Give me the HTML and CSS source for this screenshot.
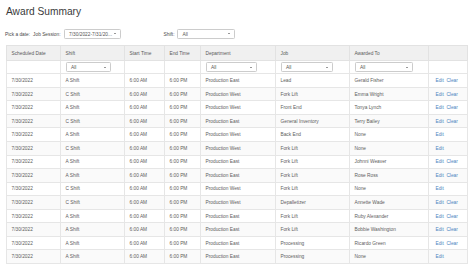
FILE: index.html
```html
<!DOCTYPE html>
<html>
<head>
<meta charset="utf-8">
<link rel="stylesheet" href="styles.css">
</head>
<body>
<div class="page">
  <h1 class="title">Award Summary</h1>
  <div class="controls">
    <span class="lbl lbl-date">Pick a date:</span>
    <span class="lbl lbl-session">Job Session:</span>
    <div class="sel sel-session"><span>7/30/2022-7/31/20...</span><i class="caret"></i></div>
    <span class="lbl lbl-shift">Shift:</span>
    <div class="sel sel-shift"><span>All</span><i class="caret"></i></div>
  </div>
  <table class="grid">
    <colgroup>
      <col class="c-date"><col class="c-shift"><col class="c-start"><col class="c-end"><col class="c-dept"><col class="c-job"><col class="c-aw"><col class="c-act">
    </colgroup>
    <thead>
      <tr class="head">
        <th>Scheduled Date</th><th>Shift</th><th>Start Time</th><th>End Time</th><th>Department</th><th>Job</th><th>Awarded To</th><th></th>
      </tr>
      <tr class="filters">
        <td></td>
        <td><div class="sel f-shift"><span>All</span><i class="caret"></i></div></td>
        <td></td><td></td>
        <td><div class="sel f-dept"><span>All</span><i class="caret"></i></div></td>
        <td><div class="sel f-job"><span>All</span><i class="caret"></i></div></td>
        <td><div class="sel f-aw"><span>All</span><i class="caret"></i></div></td>
        <td></td>
      </tr>
    </thead>
    <tbody>
      <tr><td>7/30/2022</td><td>A Shift</td><td>6:00 AM</td><td>6:00 PM</td><td>Production East</td><td>Lead</td><td>Gerald Fisher</td><td class="act"><a class="lnk">Edit</a><a class="lnk clr">Clear</a></td></tr>
      <tr><td>7/30/2022</td><td>C Shift</td><td>6:00 AM</td><td>6:00 PM</td><td>Production West</td><td>Fork Lift</td><td>Emma Wright</td><td class="act"><a class="lnk">Edit</a><a class="lnk clr">Clear</a></td></tr>
      <tr><td>7/30/2022</td><td>A Shift</td><td>6:00 AM</td><td>6:00 PM</td><td>Production West</td><td>Front End</td><td>Tonya Lynch</td><td class="act"><a class="lnk">Edit</a><a class="lnk clr">Clear</a></td></tr>
      <tr><td>7/30/2022</td><td>C Shift</td><td>6:00 AM</td><td>6:00 PM</td><td>Production East</td><td>General Inventory</td><td>Terry Bailey</td><td class="act"><a class="lnk">Edit</a><a class="lnk clr">Clear</a></td></tr>
      <tr><td>7/30/2022</td><td>A Shift</td><td>6:00 AM</td><td>6:00 PM</td><td>Production West</td><td>Back End</td><td>None</td><td class="act"><a class="lnk">Edit</a></td></tr>
      <tr><td>7/30/2022</td><td>C Shift</td><td>6:00 AM</td><td>6:00 PM</td><td>Production West</td><td>Fork Lift</td><td>None</td><td class="act"><a class="lnk">Edit</a></td></tr>
      <tr><td>7/30/2022</td><td>A Shift</td><td>6:00 AM</td><td>6:00 PM</td><td>Production East</td><td>Fork Lift</td><td>Johnni Weaver</td><td class="act"><a class="lnk">Edit</a><a class="lnk clr">Clear</a></td></tr>
      <tr><td>7/30/2022</td><td>A Shift</td><td>6:00 AM</td><td>6:00 PM</td><td>Production East</td><td>Fork Lift</td><td>Rose Ross</td><td class="act"><a class="lnk">Edit</a><a class="lnk clr">Clear</a></td></tr>
      <tr><td>7/30/2022</td><td>C Shift</td><td>6:00 AM</td><td>6:00 PM</td><td>Production West</td><td>Fork Lift</td><td>None</td><td class="act"><a class="lnk">Edit</a></td></tr>
      <tr><td>7/30/2022</td><td>C Shift</td><td>6:00 AM</td><td>6:00 PM</td><td>Production West</td><td>Depalletizer</td><td>Annette Wade</td><td class="act"><a class="lnk">Edit</a><a class="lnk clr">Clear</a></td></tr>
      <tr><td>7/30/2022</td><td>A Shift</td><td>6:00 AM</td><td>6:00 PM</td><td>Production East</td><td>Fork Lift</td><td>Ruby Alexander</td><td class="act"><a class="lnk">Edit</a><a class="lnk clr">Clear</a></td></tr>
      <tr><td>7/30/2022</td><td>A Shift</td><td>6:00 AM</td><td>6:00 PM</td><td>Production East</td><td>Fork Lift</td><td>Bobbie Washington</td><td class="act"><a class="lnk">Edit</a><a class="lnk clr">Clear</a></td></tr>
      <tr><td>7/30/2022</td><td>A Shift</td><td>6:00 AM</td><td>6:00 PM</td><td>Production East</td><td>Processing</td><td>Ricardo Green</td><td class="act"><a class="lnk">Edit</a><a class="lnk clr">Clear</a></td></tr>
      <tr><td>7/30/2022</td><td>A Shift</td><td>6:00 AM</td><td>6:00 PM</td><td>Production East</td><td>Processing</td><td>None</td><td class="act"><a class="lnk">Edit</a></td></tr>
    </tbody>
  </table>
</div>
</body>
</html>
```
FILE: styles.css
```css
html, body {
  margin: 0;
  padding: 0;
  background: #ffffff;
}
body {
  font-family: "Liberation Sans", Arial, sans-serif;
  color: #555555;
  font-size: 4.8px;
}
.page {
  padding: 6.3px 0 0 6px;
  width: 461px;
}
.title {
  margin: 0;
  font-size: 10.2px;
  line-height: 11px;
  font-weight: normal;
  color: #3a3a3a;
}
.controls {
  margin-top: 11.5px;
  height: 10.5px;
  display: flex;
  align-items: center;
  margin-left: -1px;
}
.lbl {
  color: #4a4a4a;
  font-size: 4.8px;
}
.lbl-session { margin-left: 3px; }
.sel {
  position: relative;
  box-sizing: border-box;
  background: #ffffff;
  border: 0.6px solid #cccccc;
  border-radius: 1.3px;
  display: flex;
  align-items: center;
  padding-left: 4.5px;
  color: #555555;
  font-size: 4.8px;
}
.sel-session {
  margin-left: 3px;
  width: 57px;
  height: 10.5px;
}
.lbl-shift { margin-left: 43px; }
.sel-shift {
  margin-left: 2.5px;
  width: 58px;
  height: 10.5px;
}
.caret {
  position: absolute;
  right: 3.5px;
  top: 50%;
  margin-top: -0.8px;
  width: 0;
  height: 0;
  border-left: 1.2px solid transparent;
  border-right: 1.2px solid transparent;
  border-top: 1.6px solid #333333;
}
.grid {
  margin-top: 6px;
  width: 461px;
  table-layout: fixed;
  border-collapse: collapse;
  border: 1px solid #dddddd;
}
.c-date { width: 54px; }
.c-shift { width: 64px; }
.c-start { width: 40px; }
.c-end { width: 36px; }
.c-dept { width: 75px; }
.c-job { width: 74px; }
.c-aw { width: 79px; }
.c-act { width: 39px; }
.grid th, .grid td {
  box-sizing: border-box;
  border: 1px solid #e6e6e6;
  padding: 0 0 0 4.5px;
  text-align: left;
  vertical-align: middle;
  white-space: nowrap;
  overflow: hidden;
  font-size: 4.8px;
  line-height: 5px;
}
.head th {
  height: 15px;
  background: #f0f0f0;
  font-weight: normal;
  color: #5a5a5a;
  border-color: #e2e2e2;
}
.filters td {
  height: 13px;
  background: #ffffff;
}
.f-shift { width: 45px; height: 10px; }
.f-dept { width: 51px; height: 10px; }
.f-job { width: 52px; height: 10px; }
.f-aw { width: 58px; height: 10px; }
.grid tbody td {
  height: 13.56px;
  color: #606060;
}
.grid tbody td.act {
  padding-left: 6.5px;
}
.grid tbody tr:nth-child(even) td {
  background: #fafafa;
}
.lnk {
  color: #4a86c0;
  text-decoration: none;
}
.clr {
  margin-left: 2.6px;
}
```
